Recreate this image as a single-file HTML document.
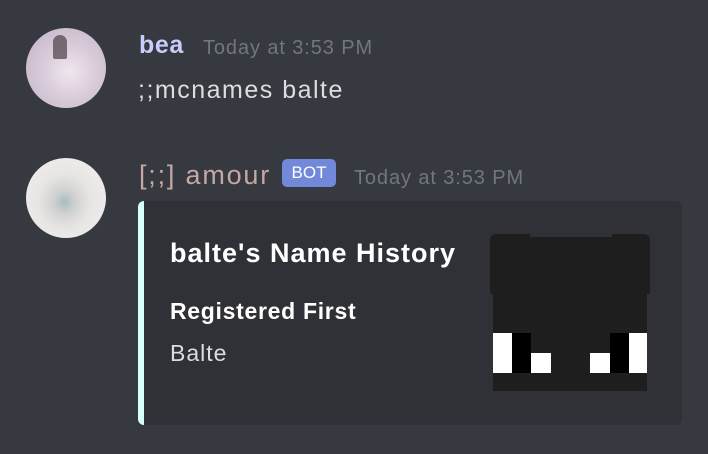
<!DOCTYPE html>
<html><head><style>
body{margin:0;width:708px;height:454px;background:#36393f;font-family:"Liberation Sans",sans-serif;position:relative;overflow:hidden}
.a{position:absolute;white-space:nowrap}
.av{border-radius:50%;width:80px;height:80px;left:26px}
</style></head><body>
<div class="a av" style="top:28px;background:radial-gradient(circle at 55% 55%,#efe6ef 0,#d8cbd9 45%,#bfb0c2 100%)"></div>
<div class="a" style="left:53px;top:35px;width:14px;height:24px;background:#4a3e46;border-radius:7px 7px 2px 2px;opacity:.7"></div>
<div class="a av" style="top:158px;background:radial-gradient(ellipse at 48% 55%,#a7bcbf 0,#cfd1d0 18%,#e8e6e4 45%,#f3f1ef 100%)"></div>
<div class="a" style="left:139px;top:31px;font-size:25px;color:#c9cdfb;font-weight:bold;letter-spacing:0.6px">bea</div>
<div class="a" style="left:203px;top:37px;font-size:20px;color:#72767d;letter-spacing:0.9px">Today at 3:53 PM</div>
<div class="a" style="left:138px;top:76px;font-size:25px;color:#dcddde;letter-spacing:1.5px">;;mcnames balte</div>
<div class="a" style="left:139px;top:160px;font-size:27px;color:#c4a8a3;letter-spacing:1.8px">[;;] amour</div>
<div class="a" style="left:282px;top:159px;width:54px;height:28px;background:#7289da;border-radius:5px;color:#fff;font-size:17px;line-height:28px;text-align:center">BOT</div>
<div class="a" style="left:354px;top:167px;font-size:20px;color:#72767d;letter-spacing:0.9px">Today at 3:53 PM</div>
<div class="a" style="left:138px;top:201px;width:544px;height:224px;background:#2f3136;border-radius:6px;border-left:6px solid #d9fffd;box-sizing:border-box"></div>
<div class="a" style="left:170px;top:238px;font-size:27px;font-weight:bold;color:#fff;letter-spacing:1px">balte's Name History</div>
<div class="a" style="left:170px;top:298px;font-size:23px;font-weight:bold;color:#fff;letter-spacing:0.7px">Registered First</div>
<div class="a" style="left:170px;top:340px;font-size:23px;color:#dcddde;letter-spacing:1px">Balte</div>
<div class="a" style="left:490px;top:234px;width:160px;height:60px;background:#1e1e1e;border-radius:6px 6px 0 0"></div>
<div class="a" style="left:530px;top:234px;width:82px;height:3px;background:#2f3136"></div>
<div class="a" style="left:493px;top:290px;width:154px;height:101px;background:#1e1e1e"></div>
<div class="a" style="left:493px;top:333px;width:19px;height:40px;background:#fff"></div>
<div class="a" style="left:512px;top:333px;width:19px;height:40px;background:#000"></div>
<div class="a" style="left:531px;top:353px;width:20px;height:20px;background:#fff"></div>
<div class="a" style="left:590px;top:353px;width:20px;height:20px;background:#fff"></div>
<div class="a" style="left:610px;top:333px;width:19px;height:40px;background:#000"></div>
<div class="a" style="left:629px;top:333px;width:18px;height:40px;background:#fff"></div>
</body></html>
